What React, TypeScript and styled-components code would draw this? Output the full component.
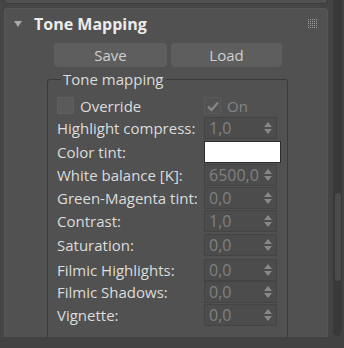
import React from "react";
import styled, { createGlobalStyle } from "styled-components";

const Global = createGlobalStyle`
  html, body {
    margin: 0;
    padding: 0;
    background: #444444;
  }
  body {
    font-family: "Open Sans", "Noto Sans", sans-serif;
    color: #dcdcdc;
  }
`;

type Row =
  | { kind: "spin"; label: string; value: string; gap: number }
  | { kind: "color"; label: string; gap: number };

const rows: Row[] = [
  { kind: "spin", label: "Highlight compress:", value: "1,0", gap: 3 },
  { kind: "color", label: "Color tint:", gap: 2 },
  { kind: "spin", label: "White balance [K]:", value: "6500,0", gap: 1 },
  { kind: "spin", label: "Green-Magenta tint:", value: "0,0", gap: 1 },
  { kind: "spin", label: "Contrast:", value: "1,0", gap: 1 },
  { kind: "spin", label: "Saturation:", value: "0,0", gap: 2 },
  { kind: "spin", label: "Filmic Highlights:", value: "0,0", gap: 3 },
  { kind: "spin", label: "Filmic Shadows:", value: "0,0", gap: 0 },
  { kind: "spin", label: "Vignette:", value: "0,0", gap: 1 },
];

const App: React.FC = () => {
  return (
    <Screen>
      <Global />
      <Viewport>
        <ScrollArea>
          <PrevRollout />
          <Rollout>
            <Header>
              <Caret />
              <Title>Tone Mapping</Title>
              <Grip width="9" height="9" viewBox="0 0 9 9">
                {[0, 2, 4, 6, 8].map((y) =>
                  [0, 2, 4, 6, 8].map((x) => (
                    <rect key={`${x}-${y}`} x={x} y={y} width="1" height="1" fill="#9c9c9c" />
                  ))
                )}
              </Grip>
            </Header>
            <Buttons>
              <Button $w={113}>Save</Button>
              <Button $w={111}>Load</Button>
            </Buttons>
            <Group>
              <Legend>Tone mapping</Legend>
              <Grid>
                <CheckLabel>
                  <Box />
                  Override
                </CheckLabel>
                <CheckLabel $disabled>
                  <Box $disabled>
                    <svg width="14" height="14" viewBox="0 0 14 14">
                      <path d="M2 7.5 L5.5 11 L12 3.5" stroke="#858585" strokeWidth="2.4" fill="none" />
                    </svg>
                  </Box>
                  On
                </CheckLabel>
                {rows.map((r) => (
                  <React.Fragment key={r.label}>
                    <Label $gap={r.gap}>{r.label}</Label>
                    {r.kind === "color" ? (
                      <Swatch $gap={r.gap} />
                    ) : (
                      <Spinner $gap={r.gap}>
                        <SpinValue>{r.value}</SpinValue>
                        <Arrows>
                          <ArrowUp />
                          <ArrowDown />
                        </Arrows>
                      </Spinner>
                    )}
                  </React.Fragment>
                ))}
              </Grid>
            </Group>
          </Rollout>
        </ScrollArea>
        <ScrollBar>
          <Track>
            <Thumb />
          </Track>
        </ScrollBar>
      </Viewport>
    </Screen>
  );
};

const Screen = styled.div`
  width: 344px;
  height: 348px;
  background: #424242;
  overflow: hidden;
`;

const Viewport = styled.div`
  display: flex;
  height: 337px;
  background: #454545;
  overflow: hidden;
`;

const ScrollArea = styled.div`
  width: 324px;
  margin-left: 4px;
  display: flex;
  flex-direction: column;
`;

const PrevRollout = styled.div`
  height: 4px;
  flex-shrink: 0;
  background: #515151;
  border: 1px solid #3c3c3c;
  border-top: none;
  border-radius: 0 0 3px 3px;
  box-sizing: border-box;
`;

const Rollout = styled.div`
  margin-top: 4px;
  flex-shrink: 0;
  background: #515151;
  border: 1px solid #575757;
  border-radius: 3px;
  height: 400px;
  box-sizing: border-box;
`;

const Header = styled.div`
  display: flex;
  align-items: center;
  height: 29px;
  padding: 0 10px 0 9px;
`;

const Caret = styled.span`
  width: 0;
  height: 0;
  border-left: 4.5px solid transparent;
  border-right: 4.5px solid transparent;
  border-top: 6px solid #a9a9a9;
  margin-top: 1px;
`;

const Title = styled.span`
  margin-left: 12px;
  font-weight: 700;
  font-size: 16px;
  color: #ececec;
  flex: 1;
`;

const Grip = styled.svg`
  margin-top: 0;
`;

const Buttons = styled.div`
  display: flex;
  gap: 4px;
  padding-left: 49px;
  margin-top: 5px;
`;

const Button = styled.div<{ $w: number }>`
  width: ${(p) => p.$w}px;
  height: 24px;
  background: #5e5e5e;
  border-radius: 4px;
  display: flex;
  align-items: center;
  justify-content: center;
  font-size: 15px;
  color: #d0d0d0;
`;

const Group = styled.fieldset`
  margin: 5px 0 0 42px;
  width: 241px;
  box-sizing: border-box;
  border: 1px solid #3a3a3a;
  border-radius: 3px;
  padding: 0 5px 40px 9px;
`;

const Legend = styled.legend`
  font-size: 15px;
  color: #dcdcdc;
  padding: 0 2px;
  margin-left: 4px;
  line-height: 14px;
`;

const Grid = styled.div`
  display: grid;
  grid-template-columns: 147px 1fr;
  align-items: center;
  margin-top: 11px;
`;

const CheckLabel = styled.div<{ $disabled?: boolean }>`
  display: flex;
  align-items: center;
  gap: 6px;
  font-size: 15px;
  height: 17px;
  color: ${(p) => (p.$disabled ? "#858585" : "#dcdcdc")};
`;

const Box = styled.span<{ $disabled?: boolean }>`
  width: 15px;
  height: 15px;
  border: 1px solid ${(p) => (p.$disabled ? "#5a5a5a" : "#5e5e5e")};
  background: ${(p) => (p.$disabled ? "#525252" : "#5a5a5a")};
  display: flex;
  align-items: center;
  justify-content: center;
`;

const Label = styled.div<{ $gap: number }>`
  font-size: 15px;
  color: #dcdcdc;
  white-space: nowrap;
  margin-top: ${(p) => p.$gap}px;
`;

const Spinner = styled.div<{ $gap: number }>`
  margin-top: ${(p) => p.$gap}px;
  width: 73px;
  height: 22px;
  box-sizing: border-box;
  background: #4c4c4c;
  border: 1px solid #444444;
  display: flex;
  align-items: center;
  justify-content: space-between;
  padding: 0 4px 0 4px;
`;

const SpinValue = styled.span`
  font-size: 16px;
  color: #808080;
`;

const Arrows = styled.span`
  display: flex;
  flex-direction: column;
  gap: 2px;
`;

const ArrowUp = styled.span`
  width: 0;
  height: 0;
  border-left: 4px solid transparent;
  border-right: 4px solid transparent;
  border-bottom: 5px solid #888888;
`;

const ArrowDown = styled(ArrowUp)`
  border-bottom: none;
  border-top: 5px solid #888888;
`;

const Swatch = styled.div<{ $gap: number }>`
  margin-top: ${(p) => p.$gap}px;
  width: 77px;
  height: 22px;
  box-sizing: border-box;
  background: #ffffff;
  border: 1px solid #2d2d2d;
`;

const ScrollBar = styled.div`
  width: 14px;
  margin-left: 2px;
  display: flex;
  justify-content: center;
  background: #434343;
`;

const Track = styled.div`
  width: 9px;
  margin-left: 1px;
  background: #393939;
  border-radius: 0 0 5px 5px;
  margin-bottom: 1px;
  padding-top: 193px;
  box-sizing: border-box;
  display: flex;
  justify-content: center;
`;

const Thumb = styled.div`
  width: 6px;
  height: 88px;
  background: #4b4b4b;
  border-radius: 3px;
`;

export default App;
